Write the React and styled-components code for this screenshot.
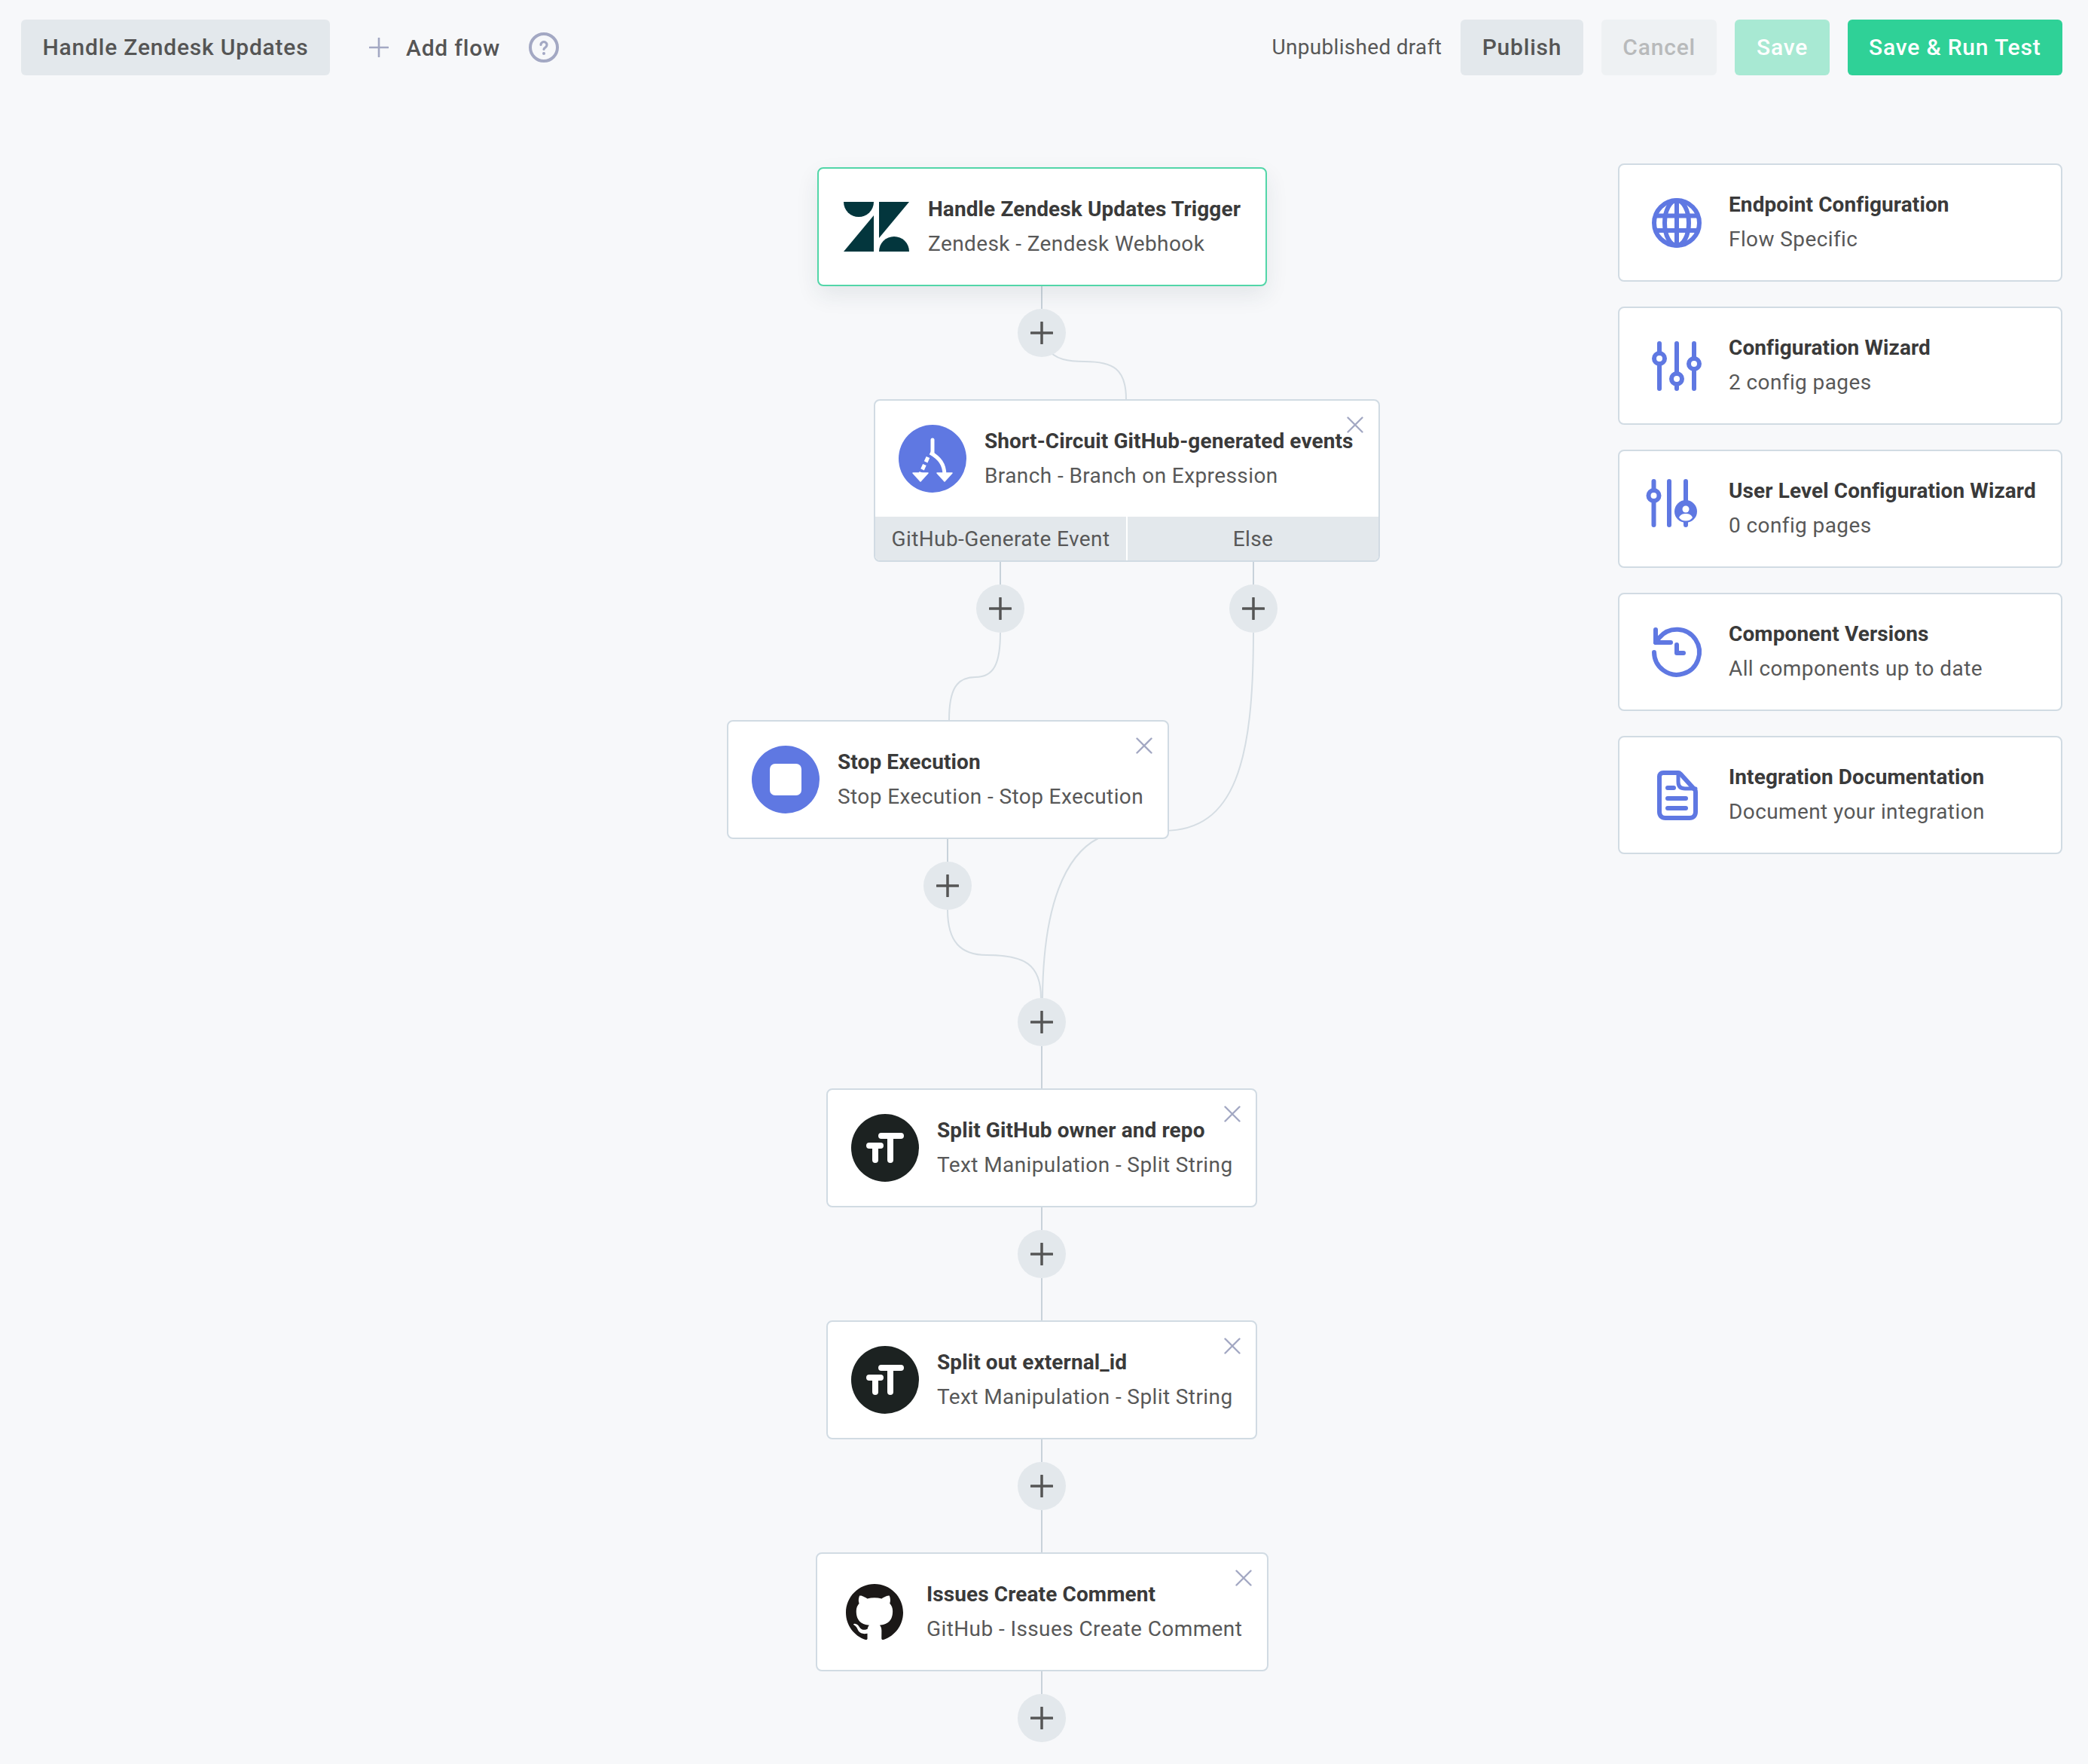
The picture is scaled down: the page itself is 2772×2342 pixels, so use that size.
import React from "react";
import styled, { createGlobalStyle, css } from "styled-components";
import { SiGithub } from "react-icons/si";

const BLUE = "#5f78e2";
const MUTED = "#a3a8c3";

const GlobalStyle = createGlobalStyle`
  html, body {
    margin: 0;
    background: #f7f8fa;
    overflow: hidden;
  }
  * {
    box-sizing: border-box;
  }
`;

const Page = styled.div`
  width: 2772px;
  height: 2342px;
  font-family: Roboto, "Liberation Sans", sans-serif;
  display: flex;
  flex-direction: column;
`;

const Toolbar = styled.header`
  height: 126px;
  padding: 26px 34px 26px 28px;
  display: flex;
  align-items: flex-start;
`;

const ToolGroup = styled.div`
  display: flex;
  align-items: center;
  height: 74px;
  margin-left: ${(p) => (p.$end ? "auto" : "0")};
  gap: 24px;
`;

const toneStyles = {
  grey: css`
    background: #e3e8ec;
    color: #555;
  `,
  faded: css`
    background: #eef1f3;
    color: #b8babb;
  `,
  mint: css`
    background: #a8e9d3;
    color: #fff;
  `,
  green: css`
    background: #2fd197;
    color: #fff;
  `,
};

const Button = styled.button`
  height: 74px;
  padding: 0 28.5px 2px;
  border: 0;
  border-radius: 6px;
  font: 500 30px Roboto, sans-serif;
  letter-spacing: 0.8px;
  ${(p) => toneStyles[p.$tone || "grey"]}
`;

const AddFlow = styled.button`
  display: flex;
  align-items: center;
  gap: 23px;
  margin-left: 28px;
  padding: 0;
  border: 0;
  background: none;
  color: #555;
  font: 500 30px Roboto, sans-serif;
  letter-spacing: 0.8px;
`;

const HelpIcon = styled.svg`
  display: block;
  margin-left: 14px;
`;

const DraftLabel = styled.span`
  font-size: 28px;
  letter-spacing: 0.3px;
  color: #585858;
  margin: 0 1px 2px 0;
`;

const Body = styled.main`
  flex: 1;
  display: flex;
  align-items: flex-start;
  padding-right: 34px;
`;

const Canvas = styled.section`
  position: relative;
  flex: 1;
  height: 2216px;
`;

const EdgeLayer = styled.svg`
  position: absolute;
  left: 0;
  top: 0;
`;

const Node = styled.div`
  position: absolute;
  left: ${(p) => p.$x}px;
  top: ${(p) => p.$y}px;
  width: ${(p) => p.$w}px;
  background: #fff;
  border: 2px solid ${(p) => (p.$active ? "#52d6a8" : "#d1dbe3")};
  border-radius: 8px;
  ${(p) => p.$active && "box-shadow: 0 12px 30px rgba(30, 50, 70, 0.09);"}
`;

const NodeHead = styled.div`
  display: flex;
  align-items: center;
  gap: 24px;
  height: 154px;
  padding: 0 31px;
  white-space: nowrap;
`;

const IconSlot = styled.div`
  flex: none;
  width: 90px;
  height: 90px;
  display: flex;
  align-items: center;
  justify-content: center;
  color: #1b1817;
`;

const Title = styled.div`
  font-size: 28px;
  font-weight: 700;
  line-height: 46px;
  color: #3a3a3a;
  letter-spacing: 0.1px;
`;

const Subtitle = styled.div`
  font-size: 28px;
  line-height: 46px;
  color: #585858;
  letter-spacing: 0.4px;
`;

const CloseButton = styled.svg`
  position: absolute;
  top: 21px;
  right: 20px;
  display: block;
`;

const BranchRow = styled.div`
  display: grid;
  grid-template-columns: 1fr 1fr;
  gap: 2px;
  height: 58px;
  overflow: hidden;
  border-radius: 0 0 6px 6px;
`;

const BranchLabel = styled.div`
  background: #e3e8ec;
  color: #585858;
  font-size: 28px;
  letter-spacing: 0.4px;
  display: flex;
  align-items: center;
  justify-content: center;
`;

const AddStep = styled.button`
  position: absolute;
  left: ${(p) => p.$x - 32}px;
  top: ${(p) => p.$y - 32}px;
  width: 64px;
  height: 64px;
  padding: 0;
  border: 0;
  border-radius: 50%;
  background: #e3e8ec;
  display: flex;
  align-items: center;
  justify-content: center;
`;

const Panel = styled.aside`
  width: 590px;
  margin-top: 91px;
  display: flex;
  flex-direction: column;
  gap: 33px;
`;

const ConfigCard = styled.div`
  height: 157px;
  background: #fff;
  border: 2px solid #d1dbe3;
  border-radius: 8px;
  padding: 0 20px 0 43px;
  display: flex;
  align-items: center;
  gap: 36px;
  white-space: nowrap;
`;

const CardText = styled.div`
  margin-bottom: 2px;
`;

const CardIcon = styled.svg`
  flex: none;
  display: block;
  overflow: visible;
`;

const Plus = ({ size = 30, color = "#555", width = 3.5 }) => (
  <svg width={size} height={size} viewBox="0 0 30 30" style={{ display: "block" }}>
    <path d="M15 1v28M1 15h28" stroke={color} strokeWidth={width} strokeLinecap="round" fill="none" />
  </svg>
);

const Close = () => (
  <CloseButton width="22" height="22" viewBox="0 0 22 22">
    <path d="M1.5 1.5l19 19M20.5 1.5l-19 19" stroke={MUTED} strokeWidth="2.4" strokeLinecap="round" />
  </CloseButton>
);

const ZendeskLogo = () => (
  <svg width="87" height="66" viewBox="0 0 87 66">
    <g fill="#03363d">
      <path d="M0 0h40a20 20 0 0 1-40 0z" />
      <path d="M40 18v48H0z" />
      <path d="M47 0h40L47 48z" />
      <path d="M47 66a20 20 0 0 1 40 0z" />
    </g>
  </svg>
);

const BranchLogo = () => (
  <svg width="90" height="90" viewBox="0 0 90 90">
    <circle cx="45" cy="45" r="45" fill={BLUE} />
    <g fill="none" stroke="#fff" strokeWidth="5">
      <path d="M45 20v18" strokeLinecap="round" />
      <path d="M42 37c12 7 19 15 19 30" />
      <path d="M39 43l-10 22" strokeDasharray="7 4" />
    </g>
    <path d="M51 64h20L61 75zM19 64h20L29 75z" fill="#fff" stroke="#fff" strokeWidth="1.5" strokeLinejoin="round" />
  </svg>
);

const StopLogo = () => (
  <svg width="90" height="90" viewBox="0 0 90 90">
    <circle cx="45" cy="45" r="45" fill={BLUE} />
    <rect x="24" y="24" width="42" height="42" rx="7" fill="#fff" />
  </svg>
);

const TextLogo = () => (
  <svg width="90" height="90" viewBox="0 0 90 90">
    <circle cx="45" cy="45" r="45" fill="#1c2221" />
    <path d="M40 29h26M52 29v32M24 42h15M32 42v19" stroke="#fff" strokeWidth="8" strokeLinecap="round" fill="none" />
  </svg>
);

const GlobeIcon = () => (
  <CardIcon width="66" height="66" viewBox="0 0 66 66" fill="none" stroke={BLUE} strokeWidth="6">
    <circle cx="33" cy="33" r="30" />
    <ellipse cx="33" cy="33" rx="16" ry="30" />
    <path d="M33 3v60M5 23.5h56M5 43h56" />
  </CardIcon>
);

const Knob = ({ x, y, r = 7 }) => <circle cx={x} cy={y} r={r} fill="#fff" stroke={BLUE} strokeWidth="6" />;

const SlidersIcon = () => (
  <CardIcon width="66" height="66" viewBox="0 0 66 66" fill="none" stroke={BLUE} strokeWidth="6" strokeLinecap="round">
    <path d="M10 3v60M33 3v60M56 3v60" />
    <Knob x={10} y={23} />
    <Knob x={33} y={50} />
    <Knob x={56} y={30} />
  </CardIcon>
);

const UserSlidersIcon = () => (
  <CardIcon width="66" height="66" viewBox="0 0 66 66" fill="none" stroke={BLUE} strokeWidth="6" strokeLinecap="round">
    <path d="M2.5 -4v58M23 -4v58M45 -4v58" />
    <Knob x={2.5} y={15} />
    <circle cx="45" cy="36" r="15" fill={BLUE} stroke="none" />
    <circle cx="45" cy="33" r="4.5" fill="#fff" stroke="none" />
    <path d="M36 44c2-4 5-5 9-5s7 1 9 5c-2 3-5 4.5-9 4.5s-7-1.5-9-4.5z" fill="#fff" stroke="none" />
  </CardIcon>
);

const HistoryIcon = () => (
  <CardIcon width="66" height="66" viewBox="0 0 66 66" fill="none" stroke={BLUE} strokeWidth="6" strokeLinecap="round" strokeLinejoin="round">
    <path d="M3 33a30 30 0 1 0 7-19.500L5 20" />
    <path d="M5 3v17h20" />
    <path d="M33 23v11h9" />
  </CardIcon>
);

const DocIcon = () => (
  <CardIcon width="66" height="66" viewBox="0 0 66 66" fill="none" stroke={BLUE} strokeWidth="6" strokeLinecap="round" strokeLinejoin="round">
    <path d="M15 3h20c1 0 2 .5 3 1.500l19 21c1 1 1 2 1 3V55c0 5-3 8-8 8H18c-5 0-8-3-8-8V8c0-3 2-5 5-5z" />
    <path d="M35 3v12c0 6 3 9 9 9h14" strokeWidth="5" />
    <path d="M21 23h8M21 37h24M21 50h24" />
  </CardIcon>
);

const straightEdges = [
  [1383, 253, 284],
  [1328, 620, 650],
  [1664, 620, 650],
  [1258, 988, 1018],
  [1383, 1263, 1320],
  [1383, 1476, 1507],
  [1383, 1571, 1628],
  [1383, 1784, 1815],
  [1383, 1879, 1936],
  [1383, 2092, 2123],
];

const curvedEdges = [
  "M1390 336C1400 352 1420 354 1440 354C1478 354 1495 364 1495 404",
  "M1328 714C1328 754 1320 773 1295 773C1270 773 1260 789 1260 830",
  "M1664 714C1664 884 1640 977 1545 977",
  "M1458 987C1415 1009 1385 1074 1384 1199",
  "M1258 1082C1258 1124 1275 1142 1310 1142C1360 1142 1382 1154 1382 1199",
];

const addSteps = [
  [1383, 316],
  [1328, 682],
  [1664, 682],
  [1258, 1050],
  [1383, 1231],
  [1383, 1539],
  [1383, 1847],
  [1383, 2155],
];

const flowNodes = [
  {
    x: 1097,
    y: 1319,
    w: 572,
    logo: <TextLogo />,
    title: "Split GitHub owner and repo",
    sub: "Text Manipulation - Split String",
  },
  {
    x: 1097,
    y: 1627,
    w: 572,
    logo: <TextLogo />,
    title: "Split out external_id",
    sub: "Text Manipulation - Split String",
  },
  {
    x: 1083,
    y: 1935,
    w: 601,
    logo: <SiGithub size={76} />,
    title: "Issues Create Comment",
    sub: "GitHub - Issues Create Comment",
  },
];

const configItems = [
  { icon: <GlobeIcon />, title: "Endpoint Configuration", sub: "Flow Specific" },
  { icon: <SlidersIcon />, title: "Configuration Wizard", sub: "2 config pages" },
  { icon: <UserSlidersIcon />, title: "User Level Configuration Wizard", sub: "0 config pages" },
  { icon: <HistoryIcon />, title: "Component Versions", sub: "All components up to date" },
  { icon: <DocIcon />, title: "Integration Documentation", sub: "Document your integration" },
];

function NodeBody({ logo, title, sub }) {
  return (
    <NodeHead>
      <IconSlot>{logo}</IconSlot>
      <div>
        <Title>{title}</Title>
        <Subtitle>{sub}</Subtitle>
      </div>
    </NodeHead>
  );
}

export default function App() {
  return (
    <Page>
      <GlobalStyle />
      <Toolbar>
        <ToolGroup>
          <Button>Handle Zendesk Updates</Button>
          <AddFlow>
            <Plus size={26} color={MUTED} width={3} />
            Add flow
          </AddFlow>
          <HelpIcon width="40" height="40" viewBox="0 0 40 40" fill="none" stroke={MUTED}>
            <circle cx="20" cy="20" r="18" strokeWidth="4" />
            <path d="M16 16.500a4 4 0 1 1 6 3.500c-1.300.8-2 1.300-2 2.500" strokeWidth="3.2" strokeLinecap="round" />
            <circle cx="20" cy="28" r="2" fill={MUTED} stroke="none" />
          </HelpIcon>
        </ToolGroup>
        <ToolGroup $end>
          <DraftLabel>Unpublished draft</DraftLabel>
          <Button>Publish</Button>
          <Button $tone="faded">Cancel</Button>
          <Button $tone="mint">Save</Button>
          <Button $tone="green">Save &amp; Run Test</Button>
        </ToolGroup>
      </Toolbar>
      <Body>
        <Canvas>
          <EdgeLayer width="2148" height="2216" viewBox="0 0 2148 2216" fill="none">
            {straightEdges.map(([x, y1, y2]) => (
              <path key={`${x}-${y1}`} d={`M${x} ${y1}V${y2}`} stroke="#c8d2da" strokeWidth="2" />
            ))}
            {curvedEdges.map((d) => (
              <path key={d} d={d} stroke="#d5dde3" strokeWidth="2" />
            ))}
          </EdgeLayer>

          <Node $x={1085} $y={96} $w={597} $active>
            <NodeBody
              logo={<ZendeskLogo />}
              title="Handle Zendesk Updates Trigger"
              sub="Zendesk - Zendesk Webhook"
            />
          </Node>

          <Node $x={1160} $y={404} $w={672}>
            <NodeBody
              logo={<BranchLogo />}
              title="Short-Circuit GitHub-generated events"
              sub="Branch - Branch on Expression"
            />
            <Close />
            <BranchRow>
              <BranchLabel>GitHub-Generate Event</BranchLabel>
              <BranchLabel>Else</BranchLabel>
            </BranchRow>
          </Node>

          <Node $x={965} $y={830} $w={587}>
            <NodeBody
              logo={<StopLogo />}
              title="Stop Execution"
              sub="Stop Execution - Stop Execution"
            />
            <Close />
          </Node>

          {flowNodes.map((node) => (
            <Node key={node.title} $x={node.x} $y={node.y} $w={node.w}>
              <NodeBody logo={node.logo} title={node.title} sub={node.sub} />
              <Close />
            </Node>
          ))}

          {addSteps.map(([x, y]) => (
            <AddStep key={`${x}-${y}`} $x={x} $y={y}>
              <Plus />
            </AddStep>
          ))}
        </Canvas>
        <Panel>
          {configItems.map((item) => (
            <ConfigCard key={item.title}>
              {item.icon}
              <CardText>
                <Title>{item.title}</Title>
                <Subtitle>{item.sub}</Subtitle>
              </CardText>
            </ConfigCard>
          ))}
        </Panel>
      </Body>
    </Page>
  );
}
